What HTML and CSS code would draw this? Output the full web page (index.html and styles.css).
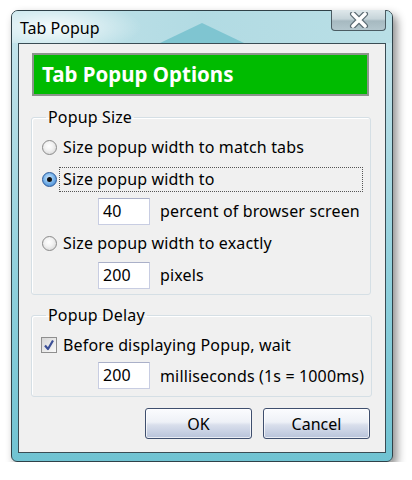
FILE: index.html
```html
<!DOCTYPE html>
<html>
<head>
  <title>Tab Popup</title>
  <link rel="stylesheet" href="styles.css">
</head>
<body>
  <div class="window">
    <div class="titlebar">
      <div class="glass-peak"></div>
      <span class="title">Tab Popup</span>
      <div class="close-btn">
        <svg width="24" height="16" viewBox="0 0 24 16">
          <path d="M6 2 L18 14 M18 2 L6 14" stroke="#5a6a72" stroke-width="6" stroke-linecap="round"/>
          <path d="M6 2 L18 14 M18 2 L6 14" stroke="#ffffff" stroke-width="3.6" stroke-linecap="round"/>
        </svg>
      </div>
    </div>

    <div class="client">
      <div class="banner">Tab Popup Options</div>

      <fieldset class="group group-size">
        <legend>Popup Size</legend>
        <div class="row">
          <span class="radio"></span>
          <span class="label">Size popup width to match tabs</span>
        </div>
        <div class="row">
          <span class="radio checked"></span>
          <span class="label focused">Size popup width to</span>
        </div>
        <div class="row row-input">
          <span class="textbox">40</span>
          <span class="label">percent of browser screen</span>
        </div>
        <div class="row">
          <span class="radio"></span>
          <span class="label">Size popup width to exactly</span>
        </div>
        <div class="row row-input">
          <span class="textbox">200</span>
          <span class="label">pixels</span>
        </div>
      </fieldset>

      <fieldset class="group group-delay">
        <legend>Popup Delay</legend>
        <div class="row">
          <span class="checkbox">
            <svg width="14" height="14" viewBox="0 0 14 14">
              <path d="M3 7.5 L6 11 L11 2.5" stroke="#3b4f96" stroke-width="2.2" fill="none" stroke-linejoin="round"/>
            </svg>
          </span>
          <span class="label">Before displaying Popup, wait</span>
        </div>
        <div class="row row-input">
          <span class="textbox">200</span>
          <span class="label">milliseconds (1s = 1000ms)</span>
        </div>
      </fieldset>

      <div class="buttons">
        <button class="btn">OK</button>
        <button class="btn">Cancel</button>
      </div>
    </div>
  </div>
</body>
</html>
```

FILE: styles.css
```css
body {
  margin: 0;
  background-color: white;
  font-family: "Noto Sans", "Open Sans", sans-serif;
  font-size: 16px;
  letter-spacing: 0.15px;
  color: #000;
}

.window {
  box-sizing: border-box;
  width: 382px;
  height: 452px;
  margin: 10px 0 0 11px;
  padding: 0 6px 8px;
  border: 1px solid #2f4148;
  border-radius: 7px 7px 6px 6px;
  background: linear-gradient(180deg, #c9e7ee 0%, #b6dee6 20%, #8fd0dc 60%, #70c3d2 100%);
  box-shadow: 4px 5px 10px rgba(0, 0, 0, 0.45);
  display: flex;
  flex-direction: column;
}

.titlebar {
  position: relative;
  height: 32px;
  display: flex;
  align-items: flex-start;
  margin: 0 -6px;
  padding: 0 6px 0 8px;
  background: radial-gradient(ellipse 90px 26px at 40px 16px, rgba(255, 255, 255, 0.85), rgba(255, 255, 255, 0) 100%),
    linear-gradient(90deg, #c2e3ea 0%, #b2dbe3 50%, #b9dfe6 100%);
  border-radius: 6px 6px 0 0;
}

.glass-peak {
  position: absolute;
  left: 148px;
  top: 12px;
  width: 84px;
  height: 20px;
  background: #7fc5d1;
  clip-path: polygon(50% 0, 100% 100%, 0 100%);
}

.title {
  position: relative;
  font-size: 16px;
  letter-spacing: 0;
  line-height: 32px;
  margin-top: 1px;
}

.close-btn {
  box-sizing: border-box;
  width: 55px;
  height: 21px;
  margin: -1px 0 0 auto;
  border: 1px solid #4b5c63;
  border-top: none;
  border-radius: 0 0 4px 4px;
  background: linear-gradient(180deg, #dfe8eb 0%, #c6d4d9 45%, #a6b9c0 55%, #b3c6cd 100%);
  display: flex;
  align-items: center;
  justify-content: center;
}

.client {
  flex: 1;
  border: 1px solid #3a4c54;
  background: #f0f0f0;
  padding: 9px 14px 0 12px;
}

.banner {
  height: 43px;
  box-sizing: border-box;
  margin: 0 2px 0 1px;
  border: 2px solid #8c948c;
  background: #00bb00;
  color: white;
  font-weight: bold;
  font-size: 20.5px;
  letter-spacing: 0;
  line-height: 39px;
  padding-left: 8px;
}

.group {
  margin: 11px 0 0;
  padding: 4px 7px 3px 10px;
  border: 1px solid #d5dfe5;
  border-radius: 3px;
  box-shadow: inset 1px 1px 0 #fff;
}

.group legend {
  margin-left: 4px;
  padding: 0 2px;
  line-height: 20px;
}

.group-delay {
  margin-top: 10px;
  padding-bottom: 5px;
}

.row {
  display: flex;
  align-items: center;
  height: 32px;
}

.group-delay .row {
  height: 31px;
}

.row-input {
  padding-left: 56px;
}

.label {
  margin-left: 6px;
  white-space: nowrap;
}

.row-input .label {
  margin-left: 10px;
}

.focused {
  flex: 1;
  margin-left: 2px;
  padding: 0 0 0 3px;
  border: 1px dotted #555;
  line-height: 23px;
}

.radio {
  width: 15px;
  height: 15px;
  box-sizing: border-box;
  border-radius: 50%;
  border: 1px solid #8a8a8a;
  background: radial-gradient(circle at 45% 40%, #ffffff 0%, #f2f2f2 40%, #cfcfcf 100%);
  display: flex;
  align-items: center;
  justify-content: center;
}

.radio.checked {
  border-color: #2c5a9a;
  background: radial-gradient(circle at 45% 40%, #d8ecff 0%, #7fb8ec 45%, #2d74c4 100%);
}

.radio.checked::after {
  content: "";
  width: 5px;
  height: 5px;
  border-radius: 50%;
  background: #111;
}

.checkbox {
  box-sizing: border-box;
  width: 16px;
  height: 16px;
  margin-left: -1px;
  border: 1px solid #8f8f8f;
  background: linear-gradient(135deg, #d6d6d6, #fafafa);
  display: flex;
  align-items: center;
  justify-content: center;
}

.textbox {
  box-sizing: border-box;
  width: 52px;
  height: 27px;
  border: 1px solid #c8cde2;
  border-top-color: #aab0c8;
  background: white;
  padding-left: 4px;
  line-height: 25px;
}

.buttons {
  display: flex;
  justify-content: flex-end;
  gap: 11px;
  margin: 11px 1px 0 0;
}

.btn {
  width: 107px;
  height: 31px;
  font-family: inherit;
  font-size: 16px;
  color: #000;
  border: 1px solid #3f4f6e;
  border-radius: 3px;
  background: linear-gradient(180deg, #fbfcfe 0%, #eef1f7 45%, #d9dfec 55%, #b8c3da 100%);
  box-shadow: inset 0 0 0 1px rgba(255, 255, 255, 0.7);
  padding: 0;
}
```
